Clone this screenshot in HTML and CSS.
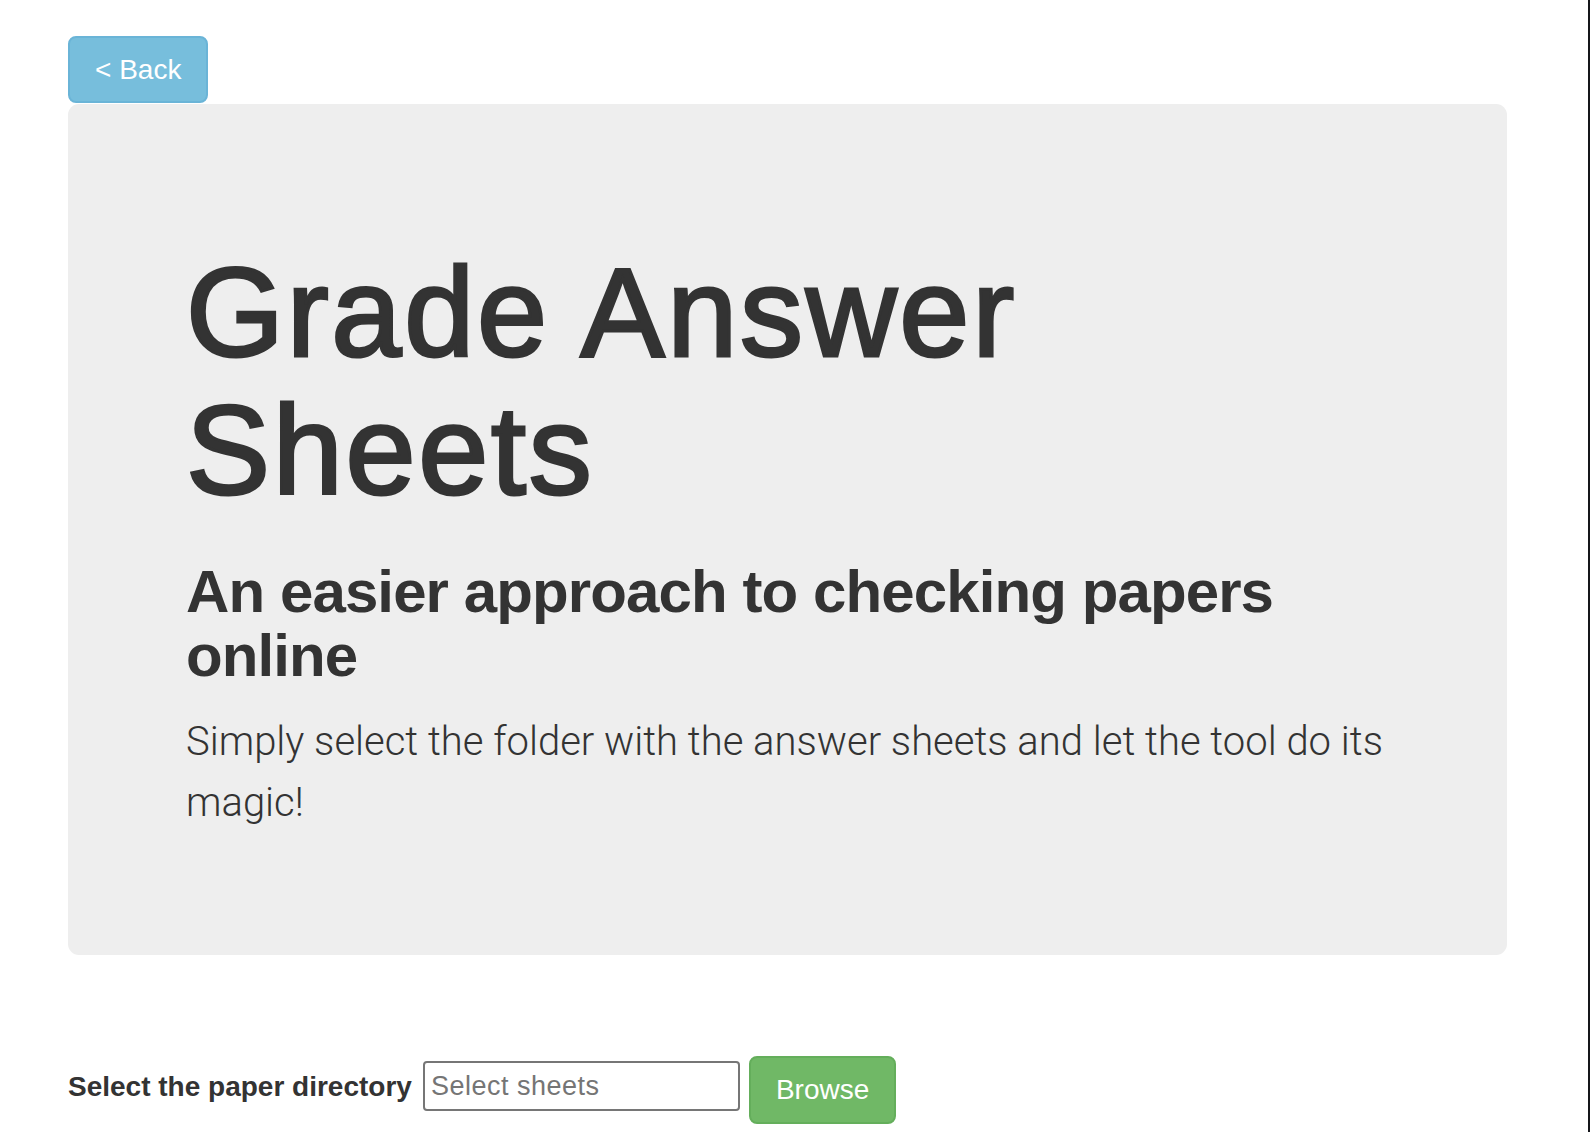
FILE: index.html
```html
<!DOCTYPE html>
<html lang="en">
<head>
<meta charset="utf-8">
<title>Grade Answer Sheets</title>
<link rel="stylesheet" href="styles.css">
</head>
<body>
<div class="page">
  <a class="btn btn-back" href="#">&lt; Back</a>
  <div class="jumbotron">
    <h1>Grade Answer Sheets</h1>
    <h2>An easier approach to checking papers online</h2>
    <p class="lead">Simply select the folder with the answer sheets and let the tool do its magic!</p>
  </div>
  <form class="picker">
    <label class="picker-label" for="dir">Select the paper directory</label>
    <input class="picker-input" id="dir" type="text" placeholder="Select sheets">
    <button class="btn btn-browse" type="button">Browse</button>
  </form>
</div>
<div class="edge"></div>
</body>
</html>
```

FILE: styles.css
```css
html, body {
  margin: 0;
  padding: 0;
  overflow: hidden;
  background: #ffffff;
}

body {
  font-family: "Liberation Sans", Arial, sans-serif;
  color: #333333;
}

.page {
  display: flex;
  flex-direction: column;
  align-items: flex-start;
  padding: 36px 0 0 68px;
}

.btn {
  display: inline-block;
  box-sizing: border-box;
  font-family: "Liberation Sans", Arial, sans-serif;
  font-size: 28px;
  font-weight: 400;
  color: #ffffff;
  text-decoration: none;
  border-radius: 8px;
  border: 2px solid transparent;
  padding: 0 25px;
  cursor: pointer;
}

.btn-back {
  height: 67px;
  line-height: 63px;
  background: #77bedc;
  border-color: #6ab4d7;
}

.jumbotron {
  box-sizing: border-box;
  width: 1439px;
  margin-top: 1px;
  padding: 140px 118px 122px;
  background: #eeeeee;
  border-radius: 11px;
}

.jumbotron h1 {
  margin: 0 0 40px;
  font-size: 126px;
  line-height: 138px;
  font-weight: 400;
  letter-spacing: 2.7px;
  -webkit-text-stroke: 3px #333333;
  color: #333333;
}

.jumbotron h2 {
  margin: 0 0 23px;
  font-size: 60px;
  line-height: 64px;
  font-weight: 700;
  letter-spacing: -0.9px;
  color: #333333;
}

.lead {
  margin: 0;
  font-family: Roboto, "Liberation Sans", sans-serif;
  font-size: 40px;
  line-height: 61px;
  font-weight: 300;
  color: #333333;
}

.picker {
  display: flex;
  align-items: flex-start;
  margin: 101px 0 0;
}

.picker-label {
  margin: 11px 11px 0 0;
  font-size: 28px;
  line-height: 40px;
  font-weight: 700;
  color: #333333;
}

.picker-input {
  box-sizing: border-box;
  width: 317px;
  height: 50px;
  margin: 5px 9px 0 0;
  padding: 0 6px;
  font-family: "Liberation Sans", Arial, sans-serif;
  font-size: 27px;
  letter-spacing: 0.5px;
  color: #333333;
  border: 2px solid #767676;
  border-radius: 4px;
  background: #ffffff;
  outline: none;
}

.picker-input::placeholder {
  color: #757575;
}

.btn-browse {
  height: 68px;
  line-height: 64px;
  background: #70b866;
  border-color: #64ae5b;
}

.edge {
  position: fixed;
  top: 0;
  right: 0;
  width: 2px;
  height: 100%;
  background: #15161a;
}
```
